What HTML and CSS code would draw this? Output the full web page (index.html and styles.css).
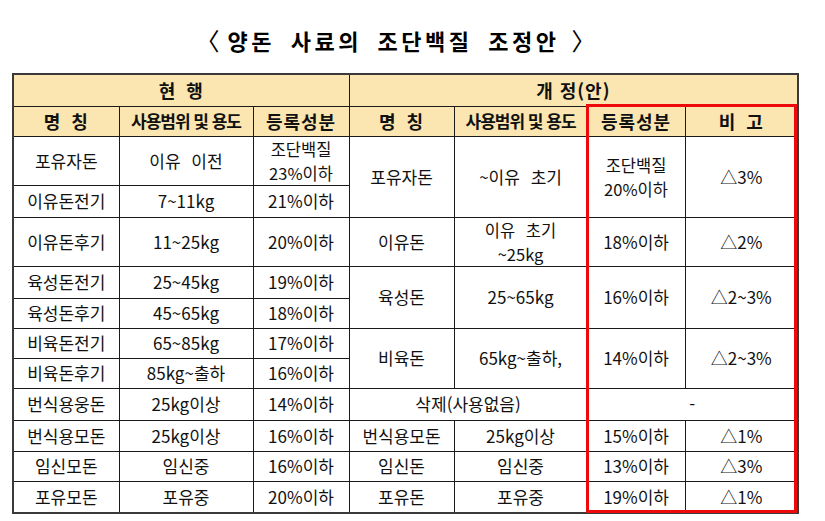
FILE: index.html
```html
<!DOCTYPE html>
<html lang="ko">
<head>
<meta charset="utf-8">
<link rel="stylesheet" href="styles.css">
</head>
<body>
<div class="page">
  <div class="title"><span class="br open">〈</span> <span class="words">양돈 사료의 조단백질 조정안</span> <span class="br close">〉</span></div>
  <div class="wrap">
    <table class="grid">
      <colgroup>
        <col class="c1"><col class="c2"><col class="c3"><col class="c4"><col class="c5"><col class="c6"><col class="c7">
      </colgroup>
      <thead>
        <tr class="h32">
          <th colspan="3" class="wide">현 행</th>
          <th colspan="4">개 정(안)</th>
        </tr>
        <tr class="h30">
          <th class="wide">명 칭</th><th class="tight">사용범위 및 용도</th><th>등록성분</th>
          <th class="wide">명 칭</th><th class="tight">사용범위 및 용도</th><th>등록성분</th><th class="wide">비 고</th>
        </tr>
      </thead>
      <tbody>
        <tr class="h49">
          <td>포유자돈</td><td class="sp">이유 이전</td><td><span class="ln">조단백질</span><span class="ln">23%이하</span></td>
          <td rowspan="2">포유자돈</td><td rowspan="2" class="sp">~이유 초기</td><td rowspan="2"><span class="ln">조단백질</span><span class="ln">20%이하</span></td><td rowspan="2">△3%</td>
        </tr>
        <tr class="h32">
          <td>이유돈전기</td><td>7~11kg</td><td>21%이하</td>
        </tr>
        <tr class="h49">
          <td>이유돈후기</td><td>11~25kg</td><td>20%이하</td>
          <td>이유돈</td><td class="sp"><span class="ln">이유 초기</span><span class="ln">~25kg</span></td><td>18%이하</td><td>△2%</td>
        </tr>
        <tr class="h32">
          <td>육성돈전기</td><td>25~45kg</td><td>19%이하</td>
          <td rowspan="2">육성돈</td><td rowspan="2">25~65kg</td><td rowspan="2">16%이하</td><td rowspan="2">△2~3%</td>
        </tr>
        <tr class="h30">
          <td>육성돈후기</td><td>45~65kg</td><td>18%이하</td>
        </tr>
        <tr class="h30">
          <td>비육돈전기</td><td>65~85kg</td><td>17%이하</td>
          <td rowspan="2">비육돈</td><td rowspan="2">65kg~출하,</td><td rowspan="2">14%이하</td><td rowspan="2">△2~3%</td>
        </tr>
        <tr class="h30">
          <td>비육돈후기</td><td>85kg~출하</td><td>16%이하</td>
        </tr>
        <tr class="h32">
          <td>번식용웅돈</td><td>25kg이상</td><td>14%이하</td>
          <td colspan="2">삭제(사용없음)</td><td colspan="2">-</td>
        </tr>
        <tr class="h31">
          <td>번식용모돈</td><td>25kg이상</td><td>16%이하</td>
          <td>번식용모돈</td><td>25kg이상</td><td>15%이하</td><td>△1%</td>
        </tr>
        <tr class="h30">
          <td>임신모돈</td><td>임신중</td><td>16%이하</td>
          <td>임신돈</td><td>임신중</td><td>13%이하</td><td>△3%</td>
        </tr>
        <tr class="h32">
          <td>포유모돈</td><td>포유중</td><td>20%이하</td>
          <td>포유돈</td><td>포유중</td><td>19%이하</td><td>△1%</td>
        </tr>
      </tbody>
    </table>
    <div class="highlight"></div>
  </div>
</div>
</body>
</html>
```
FILE: styles.css
```css
html, body {
  margin: 0;
  padding: 0;
  background: #ffffff;
}
body {
  font-family: "Noto Sans CJK KR", "Noto Sans", sans-serif;
  color: #111111;
}
.page {
  width: 825px;
  height: 521px;
  overflow: hidden;
}
.title {
  height: 73px;
  box-sizing: border-box;
  padding-top: 26px;
  padding-right: 34px;
  line-height: 28px;
  font-size: 22px;
  font-weight: 700;
  text-align: center;
  color: #000000;
  word-spacing: 0;
}
.title .br {
  display: inline-block;
  font-weight: 400;
  font-size: 24px;
}
.title .open {
  margin-right: 2px;
}
.title .close {
  margin-left: 6px;
}
.title .words {
  letter-spacing: 3.5px;
  word-spacing: 6px;
}
.wrap {
  position: relative;
  margin-left: 12px;
  width: 785px;
}
.grid {
  width: 785px;
  table-layout: fixed;
  border-collapse: collapse;
  border: 2px solid #3a3a3a;
  font-size: 17px;
}
.c1 { width: 106px; }
.c2 { width: 134px; }
.c3 { width: 96px; }
.c4 { width: 105px; }
.c5 { width: 133px; }
.c6 { width: 98px; }
.c7 { width: 113px; }
.grid th,
.grid td {
  border: 1px solid #1a1a1a;
  padding: 0;
  text-align: center;
  vertical-align: middle;
  line-height: 20px;
  white-space: nowrap;
}
.grid th {
  background: #fbe5b0;
  font-weight: 700;
  font-size: 18px;
  letter-spacing: 1px;
  color: #111111;
}
.grid th.wide {
  word-spacing: 4px;
}
.grid th.tight {
  font-size: 17px;
  letter-spacing: -1px;
}
.grid td.sp {
  word-spacing: 6px;
}
.ln {
  display: block;
  height: 24px;
  line-height: 24px;
  font-size: 16.5px;
}
.h30 { height: 30px; }
.h31 { height: 31px; }
.h32 { height: 32px; }
.h49 { height: 49px; }
.highlight {
  position: absolute;
  left: 574px;
  top: 31px;
  width: 205px;
  height: 403px;
  border: 3px solid #ee0a0a;
  pointer-events: none;
}
```
